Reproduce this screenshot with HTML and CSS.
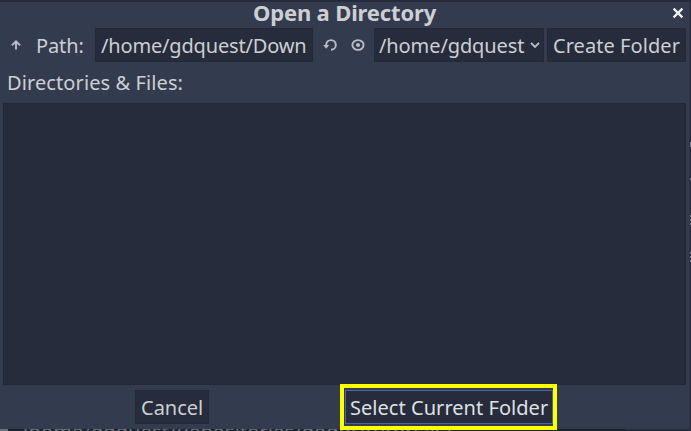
FILE: index.html
```html
<!DOCTYPE html>
<html lang="en">
<head>
<meta charset="utf-8">
<title>Open a Directory</title>
<link rel="stylesheet" href="styles.css">
</head>
<body>
<div class="backdrop"><span class="chip"></span><span class="backdrop-path">/home/gdquest/Repositories/godot/tutorials/</span></div>
<div class="specks"><i class="s1"></i><i class="s2"></i><i class="s3"></i><i class="s4"></i></div>
<main class="dialog">
  <header class="titlebar">
    <h1>Open a Directory</h1>
    <svg class="close" width="12" height="12" viewBox="0 0 12 12"><path d="M1.6 1.6l8.8 8.8M10.4 1.6l-8.8 8.8"/></svg>
  </header>
  <div class="toolbar">
    <svg class="icon up" width="12" height="12" viewBox="0 0 12 12"><path d="M6 10.6V2.7M1.8 6.4l4.2-4 4.2 4"/></svg>
    <span class="label">Path:</span>
    <div class="field path">/home/gdquest/Down</div>
    <svg class="icon reload" width="14" height="14" viewBox="0 0 14 14"><path d="M3.2 8.3V6.9a4.8 4.8 0 1 1 4.8 4.8"/><path class="solid" d="M.2 7h6L3.2 10.8z"/></svg>
    <svg class="icon eye" width="14" height="14" viewBox="0 0 14 14"><ellipse cx="7" cy="7" rx="5.6" ry="4.9"/><circle class="solid" cx="7" cy="7" r="2.1"/></svg>
    <div class="field drive"><span>/home/gdquest</span><svg class="icon" width="10" height="8" viewBox="0 0 10 8"><path d="M1 1.8l4 4 4-4"/></svg></div>
    <button class="field create">Create Folder</button>
  </div>
  <div class="caption">Directories &amp; Files:</div>
  <div class="files"></div>
  <footer class="actions">
    <button class="field cancel">Cancel</button>
    <div class="highlight"><button class="field select">Select Current Folder</button></div>
  </footer>
</main>
</body>
</html>
```
FILE: styles.css
```css
* { box-sizing: border-box; }
body {
  margin: 0;
  width: 691px;
  height: 431px;
  overflow: hidden;
  position: relative;
  background: #252b3a;
  color: #cdcfd2;
  font: 20px/34px "Noto Sans", sans-serif;
}
.dialog {
  position: relative;
  width: 690px;
  height: 427px;
  margin-top: 2px;
  background: #333b4f;
  border-right: 1px solid #2d3549;
  display: flex;
  flex-direction: column;
}
.dialog > * { flex: none; }
.titlebar { height: 26px; display: flex; justify-content: center; position: relative; }
h1 { margin: -5px 0 0; font-size: 22px; line-height: 30px; height: 31px; font-weight: 700; letter-spacing: -0.15px; white-space: nowrap; }
.close { position: absolute; left: 672px; top: 5px; fill: none; stroke: #f2f3f5; stroke-width: 2.2; }
.toolbar { display: flex; align-items: center; height: 34px; }
.icon { fill: none; stroke: #b9bdc4; stroke-width: 1.9; flex: none; }
.icon .solid { fill: #b9bdc4; stroke: none; }
.up { margin-left: 10px; }
.label { margin-left: 14px; width: 59px; padding-top: 2px; line-height: 34px; letter-spacing: -0.1px; }
.field {
  height: 34px;
  padding: 0;
  border: 1px solid #232938;
  background: #262c3b;
  color: inherit;
  font: inherit;
  line-height: 34px;
  text-align: left;
  white-space: nowrap;
  flex: none;
}
.path { width: 218px; padding-left: 5px; letter-spacing: -0.17px; }
.reload { margin-left: 10px; }
.eye { margin-left: 14px; }
.drive { width: 170px; margin-left: 9px; padding-left: 4px; display: flex; align-items: center; letter-spacing: -0.1px; }
.drive span { padding-top: 1px; }
.drive .icon { margin-left: auto; margin-right: 3px; }
.create { width: 139px; margin-left: 3px; padding-left: 5px; letter-spacing: 0.06px; }
.caption { height: 41px; padding-left: 7px; line-height: 42px; letter-spacing: 0.1px; }
.files { width: 683px; height: 282px; margin-left: 3px; border: 1px solid #222836; background: #262c3b; }
.actions { display: flex; height: 46px; margin-top: -1px; }
.cancel { width: 74px; margin: 6px 0 0 135px; padding-left: 5px; }
.highlight { width: 217px; height: 46px; margin-left: 131px; border: 4px solid #ff0; padding: 2px 0 0 1px; background: #333b4f; }
.select { display: block; width: 208px; padding-left: 4px; letter-spacing: 0.04px; border-color: #4668a7; color: #dfe1e3; }
.backdrop { position: absolute; left: 0; top: 429px; width: 626px; height: 2px; background: #1c2230; overflow: hidden; }
.chip { position: absolute; left: 0; top: 0; width: 8px; height: 2px; background: #6b717d; }
.backdrop-path { position: absolute; left: 21px; top: -11px; line-height: 28px; letter-spacing: 0.1px; color: #6d727d; white-space: nowrap; }
.specks i { position: absolute; left: 690px; width: 1px; height: 5px; background: #737987; }
.specks .s1 { top: 142px; }
.specks .s2 { top: 178px; height: 2px; }
.specks .s3 { top: 215px; height: 11px; background: repeating-linear-gradient(#737987 0 2px, #252b3a 2px 4px); }
.specks .s4 { top: 252px; height: 11px; background: repeating-linear-gradient(#737987 0 2px, #252b3a 2px 4px); }
```
